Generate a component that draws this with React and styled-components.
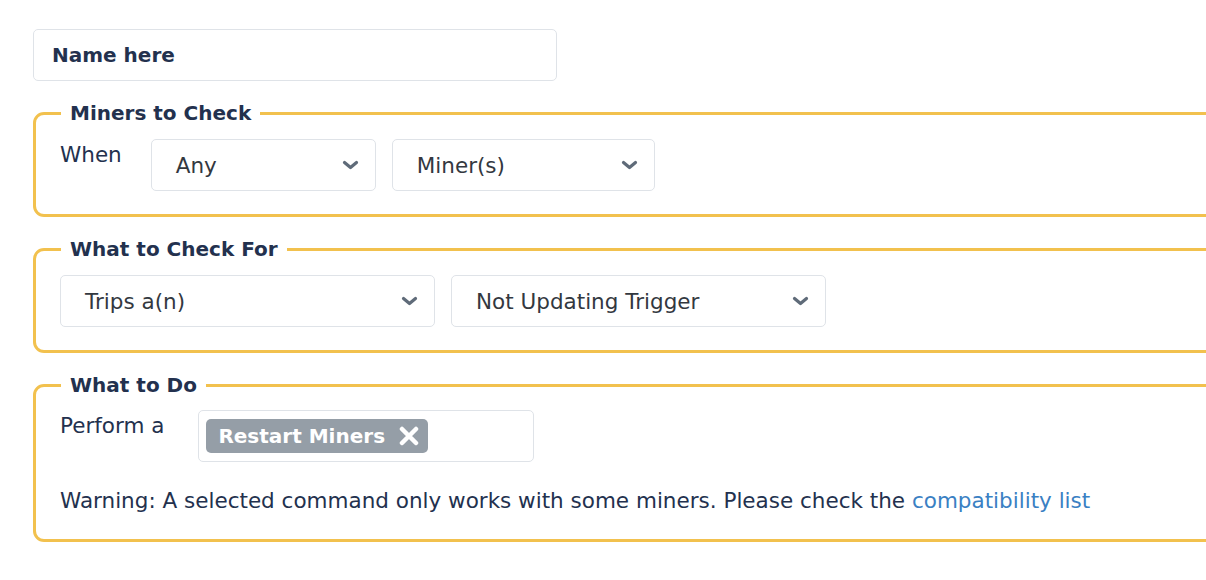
import React from 'react';
import styled, { createGlobalStyle } from 'styled-components';

const GlobalStyle = createGlobalStyle`
  body {
    margin: 0;
    background: #ffffff;
    font-family: "DejaVu Sans", "Noto Sans", sans-serif;
    color: #23314e;
    overflow: hidden;
  }
`;

const Page = styled.div`
  padding: 29px 0 0 33px;
  width: 1200px;
`;

const NameInput = styled.div`
  width: 524px;
  height: 52px;
  box-sizing: border-box;
  border: 1px solid #dfe3e8;
  border-radius: 5px;
  padding: 0 18px;
  display: flex;
  align-items: center;
  font-size: 20px;
  font-weight: 700;
  color: #23314e;
  margin-bottom: 20px;
`;

const Group = styled.fieldset`
  margin: 0 0 20px 0;
  border: 3px solid #f2c14e;
  border-radius: 11px;
  padding: ${(p) => p.$pad || '14px 24px 23px 24px'};
  min-width: 0;
`;

const Legend = styled.legend`
  font-size: 20px;
  font-weight: 700;
  line-height: 24px;
  padding: 0 9px;
  margin-left: 1px;
  color: #23314e;
`;

const Row = styled.div`
  display: flex;
  align-items: flex-start;
  gap: 16px;
`;

const Label = styled.div`
  font-size: 21.5px;
  line-height: 24px;
  padding-top: 4px;
  margin-right: ${(p) => p.$gap || 14}px;
  color: #23314e;
`;

const SelectBox = styled.div`
  width: ${(p) => p.$w}px;
  height: 52px;
  box-sizing: border-box;
  border: 1px solid #dfe3e8;
  border-radius: 5px;
  padding: 0 16px 0 24px;
  display: flex;
  align-items: center;
  justify-content: space-between;
  font-size: 21.5px;
  color: #33383f;
`;

const MultiBox = styled.div`
  width: 336px;
  height: 52px;
  box-sizing: border-box;
  border: 1px solid #dfe3e8;
  border-radius: 5px;
  padding: 0 7px;
  display: flex;
  align-items: center;
`;

const Chip = styled.span`
  display: inline-flex;
  align-items: center;
  gap: 14px;
  height: 34px;
  padding: 0 9px 0 12px;
  background: #959ea7;
  border-radius: 5px;
  color: #ffffff;
  font-size: 20px;
  font-weight: 700;
`;

const Warning = styled.p`
  margin: 27px 0 0 0;
  font-size: 21.5px;
  line-height: 24px;
  color: #23314e;
`;

const Link = styled.a`
  color: #3a80c3;
  text-decoration: none;
`;

const Chevron = () => (
  <svg width="17" height="10" viewBox="0 0 17 10">
    <path d="M2.5 2.5 L8.5 7.5 L14.5 2.5" fill="none" stroke="#5f6b79" strokeWidth="3.2" strokeLinecap="round" strokeLinejoin="round" />
  </svg>
);

const CloseX = () => (
  <svg width="20" height="20" viewBox="0 0 20 20">
    <path d="M3 3 L17 17 M17 3 L3 17" stroke="#ffffff" strokeWidth="4.5" strokeLinecap="round" />
  </svg>
);

const Select = ({ w, children }) => (
  <SelectBox $w={w}>
    <span>{children}</span>
    <Chevron />
  </SelectBox>
);

export default function App() {
  return (
    <Page>
      <GlobalStyle />
      <NameInput>Name here</NameInput>

      <Group>
        <Legend>Miners to Check</Legend>
        <Row>
          <Label $gap={13}>When</Label>
          <Select w={225}>Any</Select>
          <Select w={263}>Miner(s)</Select>
        </Row>
      </Group>

      <Group>
        <Legend>What to Check For</Legend>
        <Row>
          <Select w={375}>Trips a(n)</Select>
          <Select w={375}>Not Updating Trigger</Select>
        </Row>
      </Group>

      <Group $pad="13px 24px 26px 24px">
        <Legend>What to Do</Legend>
        <Row>
          <Label $gap={18}>Perform a</Label>
          <MultiBox>
            <Chip>
              Restart Miners
              <CloseX />
            </Chip>
          </MultiBox>
        </Row>
        <Warning>
          Warning: A selected command only works with some miners. Please check the{' '}
          <Link href="#">compatibility list</Link>
        </Warning>
      </Group>
    </Page>
  );
}
